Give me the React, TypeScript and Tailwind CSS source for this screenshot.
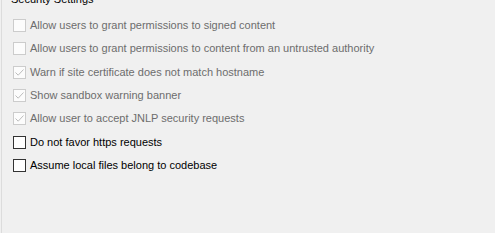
import React from 'react';

type Item = { label: string; checked: boolean; disabled: boolean };

const items: Item[] = [
  { label: 'Allow users to grant permissions to signed content', checked: false, disabled: true },
  { label: 'Allow users to grant permissions to content from an untrusted authority', checked: false, disabled: true },
  { label: 'Warn if site certificate does not match hostname', checked: true, disabled: true },
  { label: 'Show sandbox warning banner', checked: true, disabled: true },
  { label: 'Allow user to accept JNLP security requests', checked: true, disabled: true },
  { label: 'Do not favor https requests', checked: false, disabled: false },
  { label: 'Assume local files belong to codebase', checked: false, disabled: false },
];

const CheckBox: React.FC<{ checked: boolean; disabled: boolean }> = ({ checked, disabled }) => (
  <div
    className={
      disabled
        ? 'w-[13px] h-[13px] border border-[#cccccc] bg-[#fcfcfc] flex items-center justify-center shrink-0'
        : 'w-[13px] h-[13px] border border-[#333333] bg-white flex items-center justify-center shrink-0'
    }
  >
    {checked && (
      <svg width="11" height="11" viewBox="0 0 11 11">
        <path d="M1.5 5.5 L4.2 8.2 L9.5 2.5" fill="none" stroke={disabled ? '#bcbcbc' : '#333333'} strokeWidth="1" />
      </svg>
    )}
  </div>
);

export default function App() {
  return (
    <div className="w-[495px] h-[233px] bg-[#f0f0f0] overflow-hidden font-['Liberation_Sans',Arial,sans-serif] text-[11px]">
      <div className="ml-px h-full border-l border-[#dcdcdc] flex flex-col">
        <div className="-mt-[9px] pl-[9px] h-[17px] leading-[17px] text-black">Security Settings</div>
        <div className="flex flex-col pt-[6px]">
          {items.map((it) => (
            <div key={it.label} className="h-[23.33px] flex items-center pl-[11px] gap-[4px]">
              <CheckBox checked={it.checked} disabled={it.disabled} />
              <span className={it.disabled ? 'text-[#6d6d6d] leading-none' : 'text-black leading-none'}>{it.label}</span>
            </div>
          ))}
        </div>
      </div>
    </div>
  );
}
